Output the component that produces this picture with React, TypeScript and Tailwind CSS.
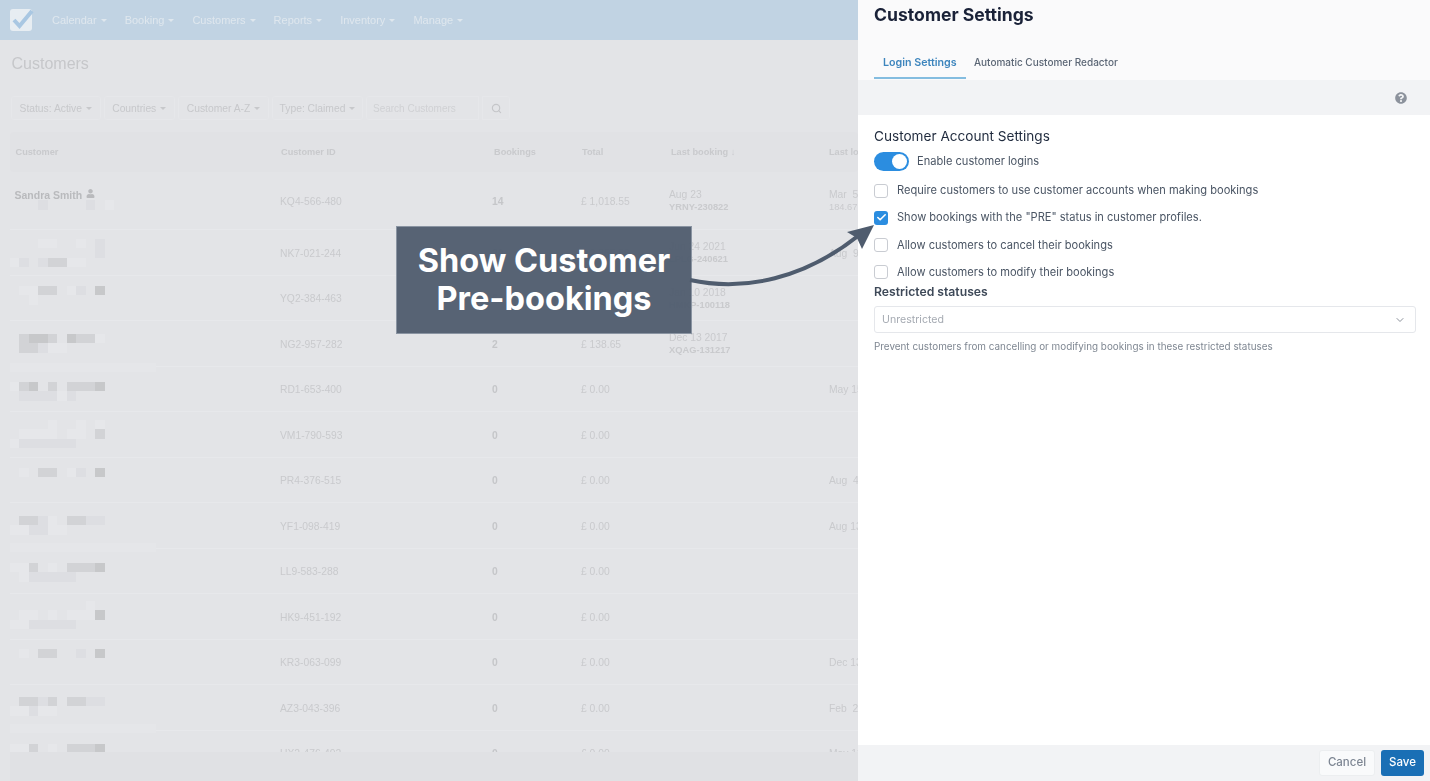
import { Check, ChevronDown, Search } from "lucide-react";
import { FaQuestionCircle, FaUser } from "react-icons/fa";

const NAV = ["Calendar", "Booking", "Customers", "Reports", "Inventory", "Manage"];

const SHADES: Record<string, string> = {
  ".": "bg-transparent",
  a: "bg-[#e6e7ea]",
  b: "bg-[#dddee2]",
  c: "bg-[#d2d3d6]",
  d: "bg-[#c7c8ca]",
};

interface Row {
  top: string;
  pixels: string[];
  band?: string;
  id: string;
  bookings: string;
  total: string;
  date?: string;
  ref?: string;
  login?: string;
}

const ROWS: Row[] = [
  { top: "pt-[8px]", pixels: ["...aa..a.b.", ".........b.", "ab.bccaa..."], id: "NK7-021-244", bookings: "20", total: "£ 2,355.56", date: "Jun 24 2021", ref: "LPLG-240621", login: "Aug  9" },
  { top: "pt-[9.5px]", pixels: [".aacc.ab.d.", "..a........"], id: "YQ2-384-463", bookings: "6", total: "£ 412.30", date: "Jan 10 2018", ref: "HMKP-100118" },
  { top: "pt-[12px]", pixels: [".cddc.dcca.", ".ccbaa....."], band: "mt-[10px]", id: "NG2-957-282", bookings: "2", total: "£ 138.65", date: "Dec 13 2017", ref: "XQAG-131217" },
  { top: "pt-[14.5px]", pixels: ["acd.c.cccd.", ".bbbbab...."], id: "RD1-653-400", bookings: "0", total: "£ 0.00", login: "May 15" },
  { top: "pt-[7px]", pixels: ["....a..a.a.", ".aaaa.aa.c.", "abbbbbb...."], id: "VM1-790-593", bookings: "0", total: "£ 0.00" },
  { top: "pt-[9.5px]", pixels: [".a.cc.ab.d."], id: "PR4-376-515", bookings: "0", total: "£ 0.00", login: "Aug  4" },
  { top: "pt-[12px]", pixels: [".ccba.ccbb.", "aabbaa....."], band: "mt-[8px]", id: "YF1-098-419", bookings: "0", total: "£ 0.00", login: "Aug 13" },
  { top: "pt-[13.5px]", pixels: ["aac.a.cccd.", ".abbbbb...."], id: "LL9-583-288", bookings: "0", total: "£ 0.00" },
  { top: "pt-[6px]", pixels: ["........a..", ".aa.a.aaad.", "aabbbbb...."], id: "HK9-451-192", bookings: "0", total: "£ 0.00" },
  { top: "pt-[8.5px]", pixels: [".a.cc..b.d."], id: "KR3-063-099", bookings: "0", total: "£ 0.00", login: "Dec 13" },
  { top: "pt-[11px]", pixels: [".ccbc.ccbb.", "aabaa......"], band: "mt-[8px]", id: "AZ3-043-396", bookings: "0", total: "£ 0.00", login: "Feb  2" },
  { top: "pt-[12.5px]", pixels: ["aac.a.cccd."], id: "UX2-476-492", bookings: "0", total: "£ 0.00", login: "May 12" },
];

const OPTIONS = [
  { label: "Require customers to use customer accounts when making bookings", checked: false },
  { label: 'Show bookings with the "PRE" status in customer profiles.', checked: true },
  { label: "Allow customers to cancel their bookings", checked: false },
  { label: "Allow customers to modify their bookings", checked: false },
];

function Caret() {
  return <span className="ml-1 inline-block border-x-[3px] border-t-[3px] border-x-transparent border-t-current align-middle" />;
}

function Filter({ label, width }: { label: string; width: string }) {
  return (
    <div className={`flex h-6 items-center justify-center rounded-[3px] border border-[#e6e7ea] pt-px text-[10.3px] text-[#c7c8cb] ${width}`}>
      {label}
      <Caret />
    </div>
  );
}

function PixelGrid({ lines }: { lines: string[] }) {
  return (
    <div className="grid grid-cols-[repeat(11,9.5px)] auto-rows-[9.5px]">
      {lines.flatMap((line, i) =>
        line.split("").map((c, j) => <div key={`${i}-${j}`} className={SHADES[c]} />),
      )}
    </div>
  );
}

function CustomerRow({ row }: { row: Row }) {
  return (
    <div className="grid h-[45.5px] grid-cols-[270.5px_212px_89px_88px_160px_1fr] grid-rows-[45.5px] items-center border-b border-[#e7e8eb] pt-[0.5px] text-[10.3px] text-[#c9cacd]">
      <div className={`h-full self-start ${row.top}`}>
        <PixelGrid lines={row.pixels} />
        {row.band && <div className={`h-[9.5px] w-[146px] bg-[#e5e6e9] ${row.band}`} />}
      </div>
      <div>{row.id}</div>
      <div className="font-bold text-[#c5c6c9]">{row.bookings}</div>
      <div>{row.total}</div>
      <div className="leading-[12px]">
        {row.date && <div>{row.date}</div>}
        {row.ref && <div className="text-[9.3px] font-bold">{row.ref}</div>}
      </div>
      <div className="whitespace-pre">{row.login}</div>
    </div>
  );
}

function Customers() {
  return (
    <div className="relative flex h-full w-[858px] shrink-0 flex-col overflow-hidden bg-[#e3e4e7] font-['Liberation_Sans',sans-serif] blur-[0.5px]">
      {/* Nav */}
      <div className="flex h-10 shrink-0 items-center bg-[#c1d3e3] pl-[10px] text-[11px] text-[#dfe7ee]">
        <div className="flex h-[22px] w-[22px] items-center justify-center rounded-[3px] bg-[#e7edf2]">
          <svg viewBox="0 0 22 22" className="h-[22px] w-[22px] overflow-visible">
            <path d="M4 11 L9.5 17 L22 2" fill="none" stroke="#a9c7e2" strokeWidth="4" />
          </svg>
        </div>
        <div className="ml-5 flex gap-[18px]">
          {NAV.map((n) => (
            <div key={n} className="whitespace-nowrap">
              {n}
              <Caret />
            </div>
          ))}
        </div>
      </div>

      <div className="flex flex-col pl-[9.5px]">
        <h1 className="pl-[2px] pt-[15px] text-[16px] leading-[18px] text-[#c6c7ca]">Customers</h1>

        {/* Filters */}
        <div className="mt-[23px] flex gap-[3px] pl-[1.5px]">
          <Filter label="Status: Active" width="w-[89.5px]" />
          <Filter label="Countries" width="w-[71.5px]" />
          <Filter label="Customer A-Z" width="w-[91px]" />
          <Filter label="Type: Claimed" width="w-[91px]" />
          <div className="flex h-6 w-[113px] items-center rounded-l-[3px] border border-[#e6e7ea] pl-[6px] text-[10px] text-[#d0d1d4]">
            Search Customers
          </div>
          <div className="flex h-6 w-[28px] items-center justify-center rounded-r-[3px] border border-[#e6e7ea] text-[#c5c6c9]">
            <Search className="h-[11px] w-[11px]" strokeWidth={2.5} />
          </div>
        </div>

        {/* Table */}
        <div className="mt-[12px] grid h-10 grid-cols-[267.5px_211px_88px_89px_158px_1fr] items-center rounded-sm bg-[#e1e2e5] pl-[6px] pt-px text-[9.2px] font-bold text-[#c9cacd]">
          <div>Customer</div>
          <div className="-ml-[2px]">Customer ID</div>
          <div>Bookings</div>
          <div>Total</div>
          <div>Last booking ↓</div>
          <div className="whitespace-nowrap">Last login</div>
        </div>

        <div className="grid h-[58px] grid-cols-[270.5px_212px_89px_88px_160px_1fr] grid-rows-[58px] items-center border-b border-[#e7e8eb] text-[10.3px] text-[#c9cacd]">
          <div className="h-full self-start pl-[5px] pt-[17px]">
            <div className="flex items-center gap-1 text-[10.5px] font-bold leading-[12px] text-[#b9babd]">
              Sandra Smith
              <FaUser className="-mt-1 h-[9px] w-[9px]" />
            </div>
            <div className="-ml-[5px] -mt-[1px]">
              <PixelGrid lines={["...b....b.a"]} />
            </div>
          </div>
          <div className="pt-px">KQ4-566-480</div>
          <div className="pt-px font-bold text-[#c5c6c9]">14</div>
          <div className="pt-px">£ 1,018.55</div>
          <div className="leading-[12px]">
            <div>Aug 23</div>
            <div className="text-[9.3px] font-bold">YRNY-230822</div>
          </div>
          <div className="leading-[12px]">
            <div className="whitespace-pre">Mar  5</div>
            <div className="text-[9.3px]">184.67.41.20</div>
          </div>
        </div>
        {ROWS.map((r) => (
          <CustomerRow key={r.id} row={r} />
        ))}
      </div>

      {/* Sticky bottom strip */}
      <div className="absolute bottom-0 left-[9.5px] right-0 h-[29px] bg-[#e0e1e4]" />
    </div>
  );
}

function Settings() {
  return (
    <div className="flex h-full flex-1 flex-col bg-white font-['Inter',sans-serif] blur-[0.4px]">
      <div className="flex h-20 shrink-0 flex-col justify-between bg-[#fafafb] pl-4">
        <h2 className="pt-[4px] text-[17.6px] font-bold leading-[22px] text-[#1a2238]">Customer Settings</h2>
        <div className="flex items-end leading-[14px]">
          <div className="mb-[1px] w-[92px] border-b-2 border-[#84bde0] pb-[7.5px] pl-[9px] pt-[0.5px] text-[10.7px] font-semibold text-[#3d85bd]">
            Login Settings
          </div>
          <div className="mb-[1px] ml-[8px] pb-[10px] text-[10px] font-medium text-[#5b6675]">Automatic Customer Redactor</div>
        </div>
      </div>

      <div className="flex h-[35px] shrink-0 items-center justify-end bg-[#f2f3f5] pr-[23px]">
        <FaQuestionCircle className="h-3 w-3 text-[#8c929c]" />
      </div>

      <div className="flex flex-1 flex-col px-4 pr-[14px] text-[11.1px] text-[#4a5564]">
        <h3 className="pt-[13px] text-[13.6px] leading-[17px] text-[#1f2a3d]">Customer Account Settings</h3>

        <div className="mt-[7px] flex items-center gap-2">
          <div className="flex h-[19px] w-[35px] items-center justify-end rounded-full bg-[#2b8de0] pr-[2px]">
            <div className="h-[15px] w-[15px] rounded-full bg-white" />
          </div>
          <span>Enable customer logins</span>
        </div>

        <div className="mt-[12.5px] flex flex-col gap-[13.3px]">
          {OPTIONS.map((o) => (
            <div key={o.label} className="flex h-[14px] items-center gap-[9px]">
              {o.checked ? (
                <div className="flex h-[14px] w-[14px] items-center justify-center rounded-[3px] bg-[#2b8de0]">
                  <Check className="h-[11px] w-[11px] text-white" strokeWidth={3.5} />
                </div>
              ) : (
                <div className="h-[14px] w-[14px] rounded-[3px] border border-[#c9ccd2] bg-white" />
              )}
              <span>{o.label}</span>
            </div>
          ))}
        </div>

        <label className="mt-[5.5px] text-[12.2px] font-semibold leading-[14px] text-[#3e4958]">Restricted statuses</label>
        <div className="mt-[7px] flex h-[27px] items-center justify-between rounded-[3px] border border-[#e5e7eb] pl-[7px] pr-[9px] pt-px text-[10.6px] text-[#a5aab2]">
          Unrestricted
          <ChevronDown className="h-3 w-3 text-[#8c929c]" />
        </div>
        <p className="mt-[6px] text-[9.9px] leading-[14px] text-[#7f8792]">
          Prevent customers from cancelling or modifying bookings in these restricted statuses
        </p>
      </div>

      <div className="flex h-9 shrink-0 items-center justify-end gap-[6px] bg-[#f2f3f5] pr-[6px] text-[11.5px] font-medium">
        <button type="button" className="h-[26px] w-[56px] rounded-[3px] border border-[#eceef0] bg-[#f9fafb] text-[#7c8592]">
          Cancel
        </button>
        <button type="button" className="h-[26px] w-[43px] rounded-[3px] bg-[#1a6fb5] text-white">
          Save
        </button>
      </div>
    </div>
  );
}

export default function App() {
  return (
    <div className="relative flex h-[781px] w-[1430px] overflow-hidden">
      <Customers />
      <Settings />

      {/* Callout over the page */}
      <div className="absolute left-[396px] top-[226px] flex h-[108px] w-[296px] items-center justify-center border border-[#8a94a2] bg-[#4f5c6e]/95 text-center font-['Inter',sans-serif] text-[32.5px] font-bold leading-[38px] text-white">
        <div>
          Show Customer
          <br />
          Pre-bookings
        </div>
      </div>
      <svg className="pointer-events-none absolute left-0 top-0 h-[781px] w-[1430px]" viewBox="0 0 1430 781">
        <path d="M690 280 C745 292 805 278 858 236" fill="none" stroke="#4f5c6e" strokeWidth="4" />
        <path d="M874 225 L847 232 L857 238 L862 249 Z" fill="#4f5c6e" />
      </svg>
    </div>
  );
}
